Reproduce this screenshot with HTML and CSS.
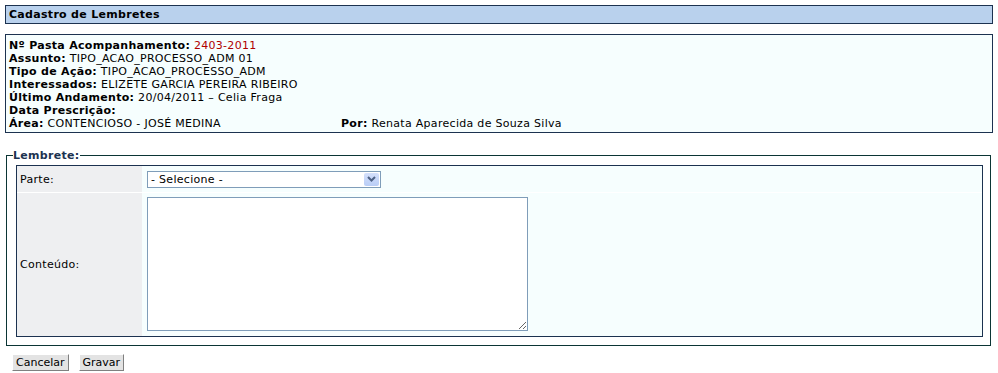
FILE: index.html
```html
<!DOCTYPE html>
<html lang="pt-BR">
<head>
  <meta charset="UTF-8" />
  <title>Cadastro de Lembretes</title>
  <link rel="stylesheet" href="styles.css">
</head>
<body>

<!-- titulo -->
<div class="titulo">Cadastro de Lembretes</div>

<!-- dados da pasta -->
<div class="dados">
  <div><b>Nº Pasta Acompanhamento:</b> <span class="pasta">2403-2011</span></div>
  <div><b>Assunto:</b> TIPO_ACAO_PROCESSO_ADM 01</div>
  <div><b>Tipo de Ação:</b> TIPO_ACAO_PROCESSO_ADM</div>
  <div><b>Interessados:</b> ELIZETE GARCIA PEREIRA RIBEIRO</div>
  <div><b>Último Andamento:</b> 20/04/2011 – Celia Fraga</div>
  <div><b>Data Prescrição:</b></div>
  <div class="linha-dupla">
    <div><b>Área:</b> CONTENCIOSO - JOSÉ MEDINA</div>
    <div><b>Por:</b> Renata Aparecida de Souza Silva</div>
  </div>
</div>

<!-- formulario -->
<fieldset class="lembrete">
  <legend>Lembrete:</legend>
  <div class="form-tabela">
    <div class="rotulo linha1">Parte:</div>
    <div class="campo linha1">
      <span class="combo">
        <select>
          <option>- Selecione -</option>
        </select>
        <span class="seta">
          <svg width="9" height="6" viewBox="0 0 9 6"><path d="M1 1 L4.5 4.5 L8 1" fill="none" stroke="#4d6185" stroke-width="2"/></svg>
        </span>
      </span>
    </div>
    <div class="rotulo">Conteúdo:</div>
    <div class="campo campo-texto">
      <textarea></textarea>
    </div>
  </div>
</fieldset>

<div class="botoes">
  <button class="botao">Cancelar</button>
  <button class="botao">Gravar</button>
</div>

</body>
</html>
```

FILE: styles.css
```css
body {
  margin: 5px;
  font-family: 'DejaVu Sans', Verdana, sans-serif;
  font-size: 11px;
  letter-spacing: 0.3px;
  color: #000;
  background: #fff;
}

.titulo {
  border: 1px solid #1c3250;
  background-color: #b9d1ed;
  font-weight: bold;
  height: 17px;
  line-height: 17px;
  padding-left: 3px;
}

.dados {
  margin-top: 10px;
  border: 1px solid #1c3250;
  background-color: #f6fefe;
  padding: 4px 3px 2px 3px;
  line-height: 13px;
}

.pasta {
  color: #b00000;
}

.linha-dupla {
  display: grid;
  grid-template-columns: 332px auto;
}

/* Lembrete */
.lembrete {
  margin: 16px 2px 0 1px;
  padding: 3px 7px 8px 9px;
  border: 1px solid #0b3535;
}

.lembrete legend {
  font-weight: bold;
  color: #1c3250;
  padding: 0;
  margin-left: -3px;
}

.form-tabela {
  display: grid;
  grid-template-columns: 125px 1fr;
  border: 1px solid #1c3250;
  background-color: #f6fefe;
}

.rotulo {
  background-color: #eeeff1;
  padding-left: 3px;
  display: flex;
  align-items: center;
}

.linha1 {
  height: 26px;
  border-bottom: 1px solid #fff;
}

.campo {
  padding-left: 5px;
  display: flex;
  align-items: center;
}

.campo-texto {
  padding-top: 4px;
  padding-bottom: 5px;
}

.combo {
  position: relative;
  display: inline-block;
}

.combo select {
  appearance: none;
  -webkit-appearance: none;
  width: 234px;
  height: 17px;
  border: 1px solid #7f9db9;
  border-radius: 0;
  background: #fff;
  font-family: inherit;
  font-size: 11px;
  letter-spacing: 0.3px;
  padding: 0 0 0 3px;
  color: #000;
  display: block;
}

.seta {
  position: absolute;
  right: 2px;
  top: 2px;
  width: 15px;
  height: 13px;
  background: linear-gradient(#d4e0fb, #b9cdf6);
  border-radius: 2px;
  display: flex;
  align-items: center;
  justify-content: center;
  pointer-events: none;
}

.campo textarea {
  width: 381px;
  height: 134px;
  box-sizing: border-box;
  border: 1px solid #7f9db9;
  background: #fff;
  margin: 0;
  display: block;
}

.botoes {
  margin-top: 8px;
  padding-left: 7px;
  display: flex;
  gap: 10px;
}

.botao {
  font-family: inherit;
  font-size: 11px;
  letter-spacing: 0;
  height: 17px;
  padding: 0 3px;
  background-color: #e3e3e3;
  border: 1px solid;
  border-color: #fff #808080 #808080 #fff;
  color: #000;
  cursor: pointer;
}
```
